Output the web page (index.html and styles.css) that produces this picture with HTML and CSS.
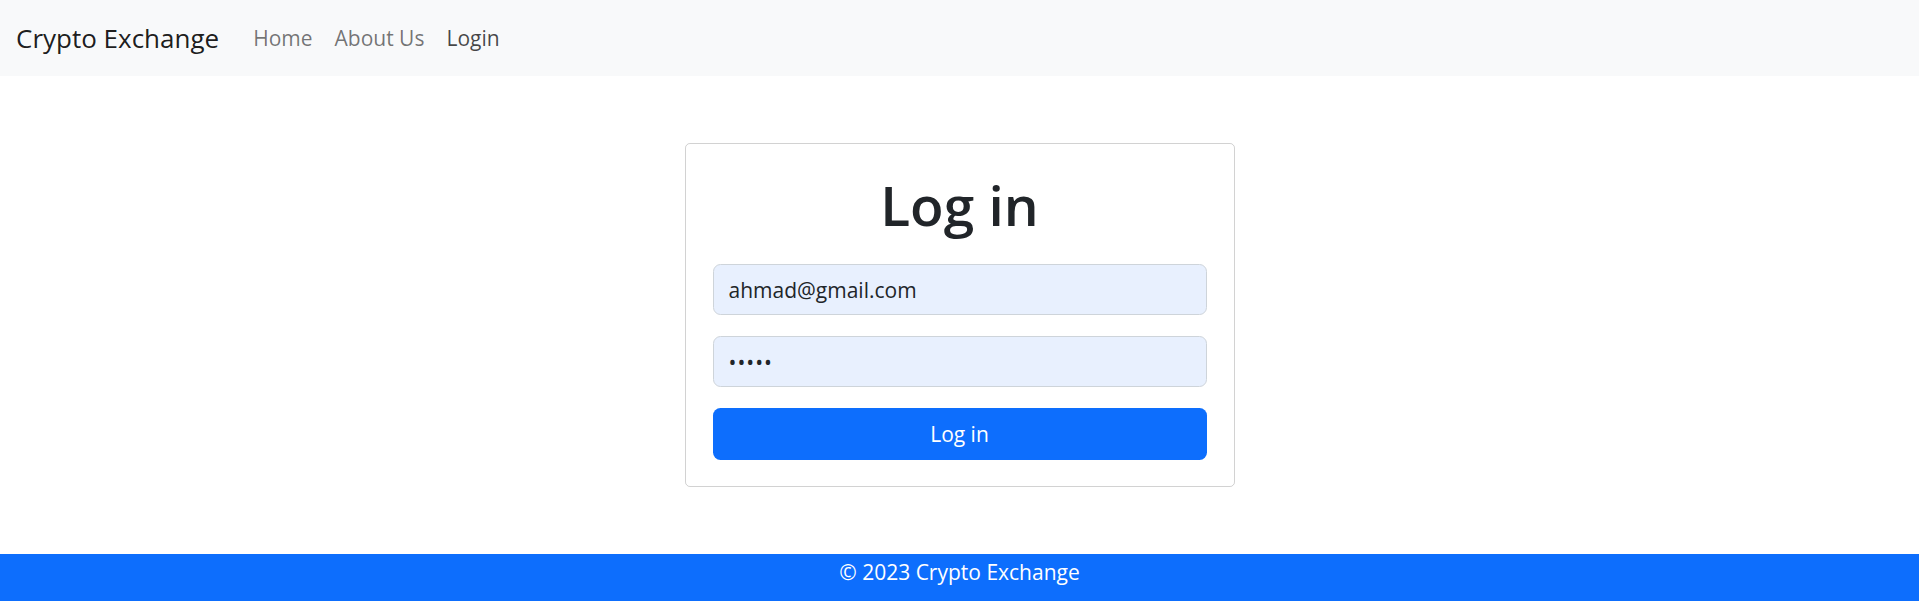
FILE: index.html
```html
<!DOCTYPE html>
<html lang="en">
<head>
<meta charset="utf-8">
<title>Crypto Exchange - Log in</title>
<link rel="stylesheet" href="styles.css">
</head>
<body>
<nav class="navbar">
  <a class="brand" href="#">Crypto Exchange</a>
  <ul class="nav">
    <li><a class="nav-link" href="#">Home</a></li>
    <li><a class="nav-link" href="#">About Us</a></li>
    <li><a class="nav-link active" href="#">Login</a></li>
  </ul>
</nav>
<main class="main">
  <form class="card">
    <h1 class="title">Log in</h1>
    <input class="field" type="email" value="ahmad@gmail.com">
    <input class="field" type="password" value="12345">
    <button class="btn" type="button">Log in</button>
  </form>
</main>
<footer class="footer">© 2023 Crypto Exchange</footer>
</body>
</html>
```
FILE: styles.css
```css
* { box-sizing: border-box; }
html, body { margin: 0; padding: 0; }
body {
  font-family: "Open Sans", "Noto Sans", sans-serif;
  font-size: 21px;
  color: #212529;
  background: #fff;
  min-height: 100vh;
  display: flex;
  flex-direction: column;
}
.navbar {
  height: 76px;
  background: #f8f9fa;
  display: flex;
  align-items: center;
  padding: 0 16px;
}
.brand {
  font-size: 26px;
  color: rgba(0,0,0,.9);
  text-decoration: none;
  margin-right: 23px;
}
.nav {
  list-style: none;
  margin: 0;
  padding: 0;
  display: flex;
}
.nav-link {
  display: block;
  padding: 10px 11px;
  color: rgba(0,0,0,.55);
  text-decoration: none;
}
.nav-link.active { color: rgba(0,0,0,.72); }
.main {
  flex: 1;
  display: flex;
  align-items: center;
  justify-content: center;
}
.card {
  width: 550px;
  height: 344px;
  border: 1px solid rgba(0,0,0,.175);
  border-radius: 5px;
  padding: 27px 27px 26px;
  display: flex;
  flex-direction: column;
}
.title {
  margin: 4px 0 0;
  height: 89px;
  font-size: 55px;
  font-weight: 600;
  line-height: 60px;
  text-align: center;
  color: #212529;
}
.field {
  height: 51px;
  margin-bottom: 21px;
  padding: 0 15px;
  border: 1px solid #ced4da;
  border-radius: 7.5px;
  background: #e8f0fe;
  font-family: inherit;
  font-size: 21px;
  color: #212529;
  outline: none;
}
.field[type=password] { letter-spacing: 1px; }
.btn {
  height: 52px;
  border: 0;
  border-radius: 7.5px;
  background: #0d6efd;
  color: #fff;
  font-family: inherit;
  font-size: 21px;
  cursor: pointer;
}
.footer {
  height: 47px;
  background: #0d6efd;
  color: #fff;
  text-align: center;
  padding-top: 3px;
  line-height: 30px;
}
```
